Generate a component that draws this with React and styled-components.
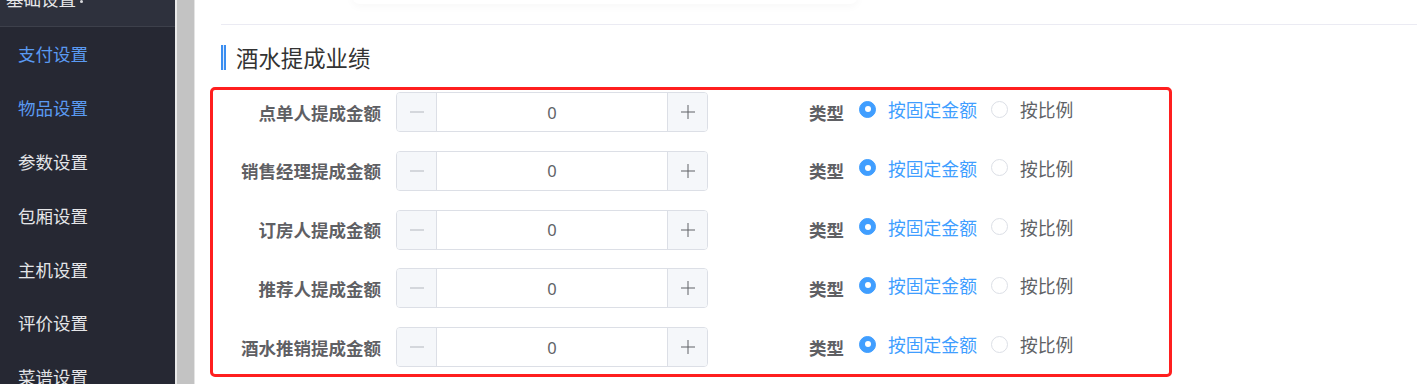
import React from "react";
import styled, { createGlobalStyle } from "styled-components";

const Global = createGlobalStyle`
  html, body { margin: 0; padding: 0; background: #fff; }
  body { overflow: hidden; font-family: "Noto Sans CJK SC", "Noto Sans", sans-serif; }
  #root { width: 1417px; height: 384px; overflow: hidden; }
`;

const Page = styled.div`
  display: flex;
  width: 1417px;
  height: 384px;
  overflow: hidden;
`;

const Sidebar = styled.aside`
  width: 175px;
  flex: none;
  background: #262833;
  display: flex;
  flex-direction: column;
  overflow: hidden;
`;

const SideHeader = styled.div`
  flex: none;
  height: 26px;
  background: #2e313d;
  border-bottom: 1px solid #3d404b;
  overflow: hidden;
  padding-left: 6px;
  display: flex;
  align-items: flex-start;
`;

const HeaderText = styled.span`
  margin-top: -12px;
  font-size: 17.5px;
  line-height: 22px;
  color: #e8e8ea;
  display: flex;
  align-items: center;
  gap: 4px;
`;

const Caret = styled.span`
  width: 3px;
  height: 3px;
  border-radius: 50%;
  background: #d8d8dc;
  margin-top: 4px;
`;

const MenuItem = styled.div`
  flex: none;
  height: 53.8px;
  display: flex;
  align-items: center;
  padding-left: 18px;
  font-size: 17.5px;
  color: ${(p) => (p.$active ? "#5a9af2" : "#e4e5e8")};
  white-space: nowrap;
`;

const Gutter = styled.div`
  width: 17px;
  flex: none;
  background: #c3c3c3;
  border-left: 2px solid #e9e9e9;
  border-right: 1px solid #e4e4e4;
`;

const Main = styled.main`
  flex: 1;
  background: #fff;
  padding-left: 15px;
  display: flex;
  flex-direction: column;
`;

const GhostCard = styled.div`
  flex: none;
  margin-top: -40px;
  margin-left: 142px;
  width: 506px;
  height: 44px;
  background: #fff;
  border-radius: 8px;
  box-shadow: 0 3px 8px rgba(0, 0, 0, 0.03);
`;

const Divider = styled.div`
  flex: none;
  margin-top: 20px;
  margin-left: 11px;
  height: 1px;
  background: #ebebf3;
`;

const TitleRow = styled.div`
  flex: none;
  margin-top: 20px;
  margin-left: 11px;
  height: 25px;
  display: flex;
  align-items: center;
  gap: 10px;
`;

const TitleBar = styled.span`
  width: 1px;
  height: 25px;
  border-left: 2px solid #3b8ef0;
  border-right: 2px solid #3b8ef0;
  background: #dceafd;
`;

const TitleText = styled.h2`
  margin: 0;
  font-size: 22.4px;
  font-weight: 400;
  line-height: 25px;
  color: #333;
`;

const FormBox = styled.div`
  flex: none;
  margin-top: 17px;
  width: 956px;
  border: 3px solid #ff1f1f;
  border-radius: 5px;
  padding: 2px 0 7px;
  display: flex;
  flex-direction: column;
  gap: 18.75px;
`;

const Row = styled.div`
  height: 40px;
  display: flex;
  align-items: center;
`;

const Label = styled.label`
  width: 168px;
  text-align: right;
  font-size: 17.5px;
  font-weight: 700;
  color: #5f6064;
  white-space: nowrap;
  margin-right: 15px;
`;

const Stepper = styled.div`
  width: 312px;
  height: 40px;
  box-sizing: border-box;
  border: 1px solid #dcdfe6;
  border-radius: 4px;
  display: flex;
  overflow: hidden;
`;

const StepBtn = styled.span`
  width: 39px;
  flex: none;
  background: #f5f7fa;
  display: flex;
  align-items: center;
  justify-content: center;
  ${(p) => (p.$side === "left" ? "border-right: 1px solid #dcdfe6;" : "border-left: 1px solid #dcdfe6;")}
`;

const StepValue = styled.span`
  flex: 1;
  display: flex;
  align-items: center;
  justify-content: center;
  font-family: "Noto Sans", "Noto Sans CJK SC", sans-serif;
  font-size: 16.5px;
  color: #606266;
`;

const TypeLabel = styled.span`
  margin-left: 101px;
  font-size: 17.5px;
  font-weight: 700;
  color: #5f6064;
  white-space: nowrap;
`;

const RadioGroup = styled.div`
  align-self: flex-start;
  height: 34px;
  margin-left: 15px;
  display: flex;
  align-items: center;
`;

const RadioItem = styled.span`
  display: flex;
  align-items: center;
  gap: 12px;
  margin-right: 14px;
  font-size: 17.8px;
  color: ${(p) => (p.$checked ? "#409eff" : "#606266")};
  white-space: nowrap;
`;

const RadioDot = styled.span`
  width: 17px;
  height: 17px;
  box-sizing: border-box;
  border-radius: 50%;
  border: 1px solid ${(p) => (p.$checked ? "#409eff" : "#dcdfe6")};
  background: ${(p) => (p.$checked ? "#409eff" : "#fff")};
  display: flex;
  align-items: center;
  justify-content: center;
  &::after {
    content: "";
    width: 6px;
    height: 6px;
    border-radius: 50%;
    background: #fff;
    display: ${(p) => (p.$checked ? "block" : "none")};
  }
`;

const Minus = () => (
  <svg width="14" height="2" viewBox="0 0 14 2">
    <rect x="0" y="0.5" width="14" height="1" fill="#b4b7bd" />
  </svg>
);

const Plus = () => (
  <svg width="14" height="14" viewBox="0 0 14 14">
    <rect x="0" y="6.5" width="14" height="1" fill="#606266" />
    <rect x="6.5" y="0" width="1" height="14" fill="#606266" />
  </svg>
);

const menu = [
  { t: "支付设置", a: true },
  { t: "物品设置", a: true },
  { t: "参数设置" },
  { t: "包厢设置" },
  { t: "主机设置" },
  { t: "评价设置" },
  { t: "菜谱设置" },
];

const rows = ["点单人提成金额", "销售经理提成金额", "订房人提成金额", "推荐人提成金额", "酒水推销提成金额"];

export default function App() {
  return (
    <>
      <Global />
      <Page>
        <Sidebar>
          <SideHeader>
            <HeaderText>
              基础设置
              <Caret />
            </HeaderText>
          </SideHeader>
          {menu.map((m) => (
            <MenuItem key={m.t} $active={m.a}>
              {m.t}
            </MenuItem>
          ))}
        </Sidebar>
        <Gutter />
        <Main>
          <GhostCard />
          <Divider />
          <TitleRow>
            <TitleBar />
            <TitleText>酒水提成业绩</TitleText>
          </TitleRow>
          <FormBox>
            {rows.map((r) => (
              <Row key={r}>
                <Label>{r}</Label>
                <Stepper>
                  <StepBtn $side="left">
                    <Minus />
                  </StepBtn>
                  <StepValue>0</StepValue>
                  <StepBtn $side="right">
                    <Plus />
                  </StepBtn>
                </Stepper>
                <TypeLabel>类型</TypeLabel>
                <RadioGroup>
                  <RadioItem $checked>
                    <RadioDot $checked />
                    按固定金额
                  </RadioItem>
                  <RadioItem>
                    <RadioDot />
                    按比例
                  </RadioItem>
                </RadioGroup>
              </Row>
            ))}
          </FormBox>
        </Main>
      </Page>
    </>
  );
}
